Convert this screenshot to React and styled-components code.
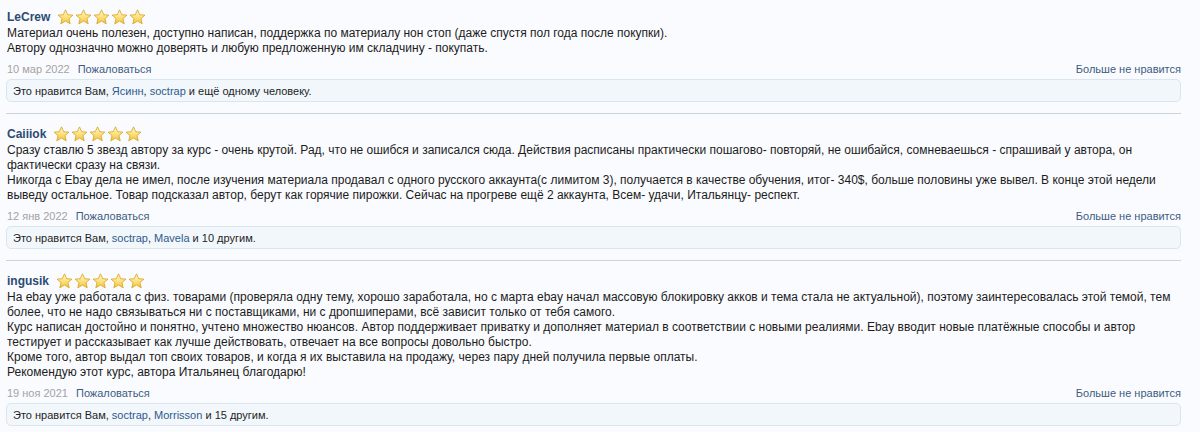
import React from 'react'
import styled, { createGlobalStyle } from 'styled-components'

const GlobalStyle = createGlobalStyle`
    html, body {
        margin: 0;
        padding: 0;
        background: #fafbfe;
    }
    body {
        font-family: "Liberation Sans", Arial, sans-serif;
        color: #1e1e1e;
    }
`;

const reviews = [
    {
        name: 'LeCrew',
        date: '10 мар 2022',
        text: [
            'Материал очень полезен, доступно написан, поддержка по материалу нон стоп (даже спустя пол года после покупки).',
            'Автору однозначно можно доверять и любую предложенную им складчину - покупать.',
        ],
        likes: ['Ясинн', 'soctrap'],
        rest: 'ещё одному человеку',
    },
    {
        name: 'Caiiiok',
        date: '12 янв 2022',
        text: [
            'Сразу ставлю 5 звезд автору за курс - очень крутой. Рад, что не ошибся и записался сюда. Действия расписаны практически пошагово- повторяй, не ошибайся, сомневаешься - спрашивай у автора, он фактически сразу на связи.',
            'Никогда с Ebay дела не имел, после изучения материала продавал с одного русского аккаунта(с лимитом 3), получается в качестве обучения, итог- 340$, больше половины уже вывел. В конце этой недели выведу остальное. Товар подсказал автор, берут как горячие пирожки. Сейчас на прогреве ещё 2 аккаунта, Всем- удачи, Итальянцу- респект.',
        ],
        likes: ['soctrap', 'Mavela'],
        rest: '10 другим',
    },
    {
        name: 'ingusik',
        date: '19 ноя 2021',
        text: [
            'На ebay уже работала с физ. товарами (проверяла одну тему, хорошо заработала, но с марта ebay начал массовую блокировку акков и тема стала не актуальной), поэтому заинтересовалась этой темой, тем более, что не надо связываться ни с поставщиками, ни с дропшиперами, всё зависит только от тебя самого.',
            'Курс написан достойно и понятно, учтено множество нюансов. Автор поддерживает приватку и дополняет материал в соответствии с новыми реалиями. Ebay вводит новые платёжные способы и автор тестирует и рассказывает как лучше действовать, отвечает на все вопросы довольно быстро.',
            'Кроме того, автор выдал топ своих товаров, и когда я их выставила на продажу, через пару дней получила первые оплаты.',
            'Рекомендую этот курс, автора Итальянец благодарю!',
        ],
        likes: ['soctrap', 'Morrisson'],
        rest: '15 другим',
    },
];

function Star() {
    return (
        <StarIcon viewBox="0 0 20 19">
            <defs>
                <linearGradient id="starFill" x1="0" y1="0" x2="0" y2="1">
                    <stop offset="0%" stopColor="#fffbe0" />
                    <stop offset="45%" stopColor="#fde58a" />
                    <stop offset="100%" stopColor="#f2c23a" />
                </linearGradient>
            </defs>
            <path
                d="M10 1 L12.6 6.8 L18.8 7.3 L14.1 11.4 L15.6 17.6 L10 14.3 L4.4 17.6 L5.9 11.4 L1.2 7.3 L7.4 6.8 Z"
                fill="url(#starFill)"
                stroke="#d9a520"
                strokeWidth="1"
                strokeLinejoin="round"
            />
        </StarIcon>
    )
}

function Review({ review }) {
    return (
        <ReviewBlock>
            <Header>
                <Author>{review.name}</Author>
                <Stars>
                    {[0, 1, 2, 3, 4].map(i => <Star key={i} />)}
                </Stars>
            </Header>
            <Body>
                {review.text.map((line, i) => <p key={i}>{line}</p>)}
            </Body>
            <Meta>
                <MetaLeft>
                    <DateText>{review.date}</DateText>
                    <MetaLink>Пожаловаться</MetaLink>
                </MetaLeft>
                <MetaLink>Больше не нравится</MetaLink>
            </Meta>
            <LikesBox>
                Это нравится Вам, <LikeName>{review.likes[0]}</LikeName>, <LikeName>{review.likes[1]}</LikeName> и {review.rest}.
            </LikesBox>
        </ReviewBlock>
    )
}

export default function App() {
    return (
        <>
            <GlobalStyle />
            <List>
                {reviews.map(r => <Review key={r.name} review={r} />)}
            </List>
        </>
    )
}

const List = styled.div`
    width: 1175px;
    margin-left: 6px;
`;

const ReviewBlock = styled.div`
    padding: 11px 0 11px;
    border-bottom: 1px solid #c9d4df;
    &:first-child {
        padding-top: 8px;
    }
`;

const Header = styled.div`
    display: flex;
    align-items: center;
    height: 18px;
    padding-left: 1px;
`;

const Author = styled.a`
    font-size: 12px;
    font-weight: 700;
    color: #2c4a74;
    cursor: pointer;
`;

const Stars = styled.div`
    display: flex;
    align-items: center;
    margin-left: 7px;
    gap: 1px;
`;

const StarIcon = styled.svg`
    width: 17px;
    height: 16px;
    display: block;
`;

const Body = styled.div`
    font-size: 12px;
    line-height: 15px;
    color: #1c1c1c;
    padding-left: 1px;
    p {
        margin: 0;
    }
`;

const Meta = styled.div`
    display: flex;
    justify-content: space-between;
    align-items: center;
    margin-top: 5px;
    height: 16px;
    font-size: 11px;
    padding-left: 1px;
`;

const MetaLeft = styled.div`
    display: flex;
    gap: 8px;
`;

const DateText = styled.span`
    color: #a3a3a3;
`;

const MetaLink = styled.a`
    color: #3d5b82;
    cursor: pointer;
`;

const LikesBox = styled.div`
    margin-top: 2px;
    height: 23px;
    box-sizing: border-box;
    padding: 0 6px;
    display: flex;
    align-items: center;
    white-space: pre;
    font-size: 11px;
    color: #1e1e1e;
    background: #f2f7fc;
    border: 1px solid #d9e5ef;
    border-radius: 5px;
`;

const LikeName = styled.a`
    color: #2e5a8c;
    cursor: pointer;
`;
